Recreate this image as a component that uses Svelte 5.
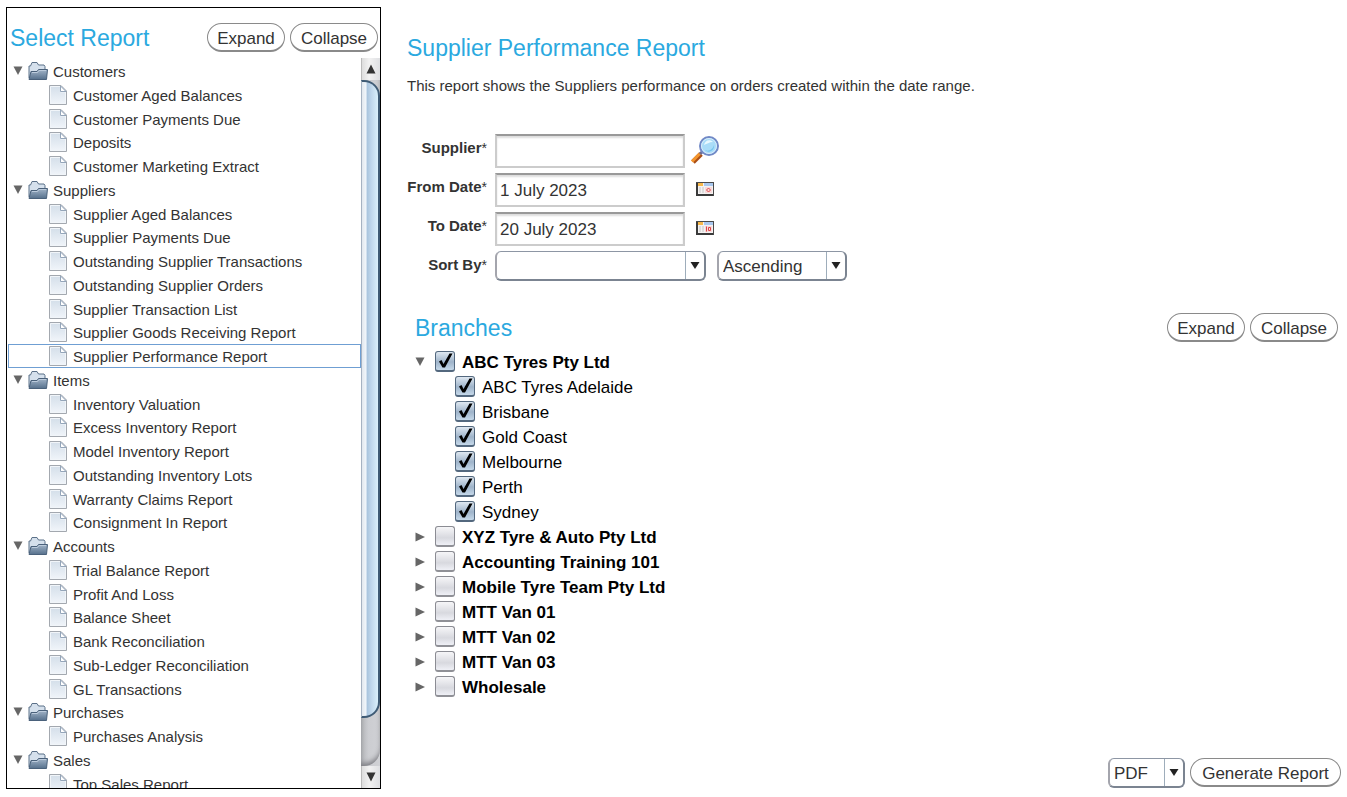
<script lang="ts">
	type Folder = { name: string; open: boolean; reports: string[] };
	type Branch = { name: string; open: boolean; checked: boolean; sites: { name: string; checked: boolean }[] };

	let folders: Folder[] = $state([
		{
			name: 'Customers',
			open: true,
			reports: ['Customer Aged Balances', 'Customer Payments Due', 'Deposits', 'Customer Marketing Extract']
		},
		{
			name: 'Suppliers',
			open: true,
			reports: [
				'Supplier Aged Balances',
				'Supplier Payments Due',
				'Outstanding Supplier Transactions',
				'Outstanding Supplier Orders',
				'Supplier Transaction List',
				'Supplier Goods Receiving Report',
				'Supplier Performance Report'
			]
		},
		{
			name: 'Items',
			open: true,
			reports: [
				'Inventory Valuation',
				'Excess Inventory Report',
				'Model Inventory Report',
				'Outstanding Inventory Lots',
				'Warranty Claims Report',
				'Consignment In Report'
			]
		},
		{
			name: 'Accounts',
			open: true,
			reports: [
				'Trial Balance Report',
				'Profit And Loss',
				'Balance Sheet',
				'Bank Reconciliation',
				'Sub-Ledger Reconciliation',
				'GL Transactions'
			]
		},
		{ name: 'Purchases', open: true, reports: ['Purchases Analysis'] },
		{ name: 'Sales', open: true, reports: ['Top Sales Report'] }
	]);

	const site = (name: string) => ({ name, checked: true });
	const closed = (name: string): Branch => ({ name, open: false, checked: false, sites: [] });

	let branches: Branch[] = $state([
		{
			name: 'ABC Tyres Pty Ltd',
			open: true,
			checked: true,
			sites: ['ABC Tyres Adelaide', 'Brisbane', 'Gold Coast', 'Melbourne', 'Perth', 'Sydney'].map(site)
		},
		closed('XYZ Tyre & Auto Pty Ltd'),
		closed('Accounting Training 101'),
		closed('Mobile Tyre Team Pty Ltd'),
		closed('MTT Van 01'),
		closed('MTT Van 02'),
		closed('MTT Van 03'),
		closed('Wholesale')
	]);

	let selected = $state('Supplier Performance Report');
	let supplier = $state('');
	let fromDate = $state('1 July 2023');
	let toDate = $state('20 July 2023');

	function toggleAll(list: { open: boolean }[], open: boolean) {
		for (const entry of list) entry.open = open;
	}
</script>

{#snippet triangle(open: boolean)}
	<svg class="triangle" viewBox="0 0 10 10" aria-hidden="true">
		<path d={open ? 'M0.5 0.5h9L5 9z' : 'M0.5 0.5v9L10 5z'} />
	</svg>
{/snippet}

{#snippet dropArrow()}
	<span class="drop">
		<svg width="10" height="8" viewBox="0 0 10 8" aria-hidden="true"><path d="M0.5 0h9L5 7z" fill="#222" /></svg>
	</span>
{/snippet}

{#snippet calendar(day: string)}
	<svg width="18" height="14" viewBox="0 0 18 14" aria-hidden="true">
		<rect x="0.5" y="0.5" width="17" height="13" fill="#f4f2f2" stroke="#4a4a4a" />
		<path d="M1 1v12h16" fill="none" stroke="#3a3a3a" stroke-width="2" />
		<path d="M2 1h5v3H2z" fill="#f7b84b" />
		<path d="M8 1h9v3H8z" fill="#a9c8ef" />
		<path d="M3 5h2v6H3zM6 5h2v6H6z" fill="#dedcdc" />
		<rect x="9" y="5" width="7" height="6" fill="#f8dada" />
		<path d={day} fill="none" stroke="#dc4548" />
	</svg>
{/snippet}

<svg class="defs" width="0" height="0" aria-hidden="true">
	<defs>
		<linearGradient id="folder" x2="0" y2="1">
			<stop offset="0" stop-color="#a3b5c9" />
			<stop offset="1" stop-color="#56708c" />
		</linearGradient>
		<linearGradient id="page" x2="0" y2="1">
			<stop offset="0" stop-color="#d3dee9" />
			<stop offset="1" stop-color="#f1f5fa" />
		</linearGradient>
	</defs>
</svg>

<div class="app">
	<aside>
		<header>
			<h2>Select Report</h2>
			<button class="pill expand" onclick={() => toggleAll(folders, true)}>Expand</button>
			<button class="pill collapse" onclick={() => toggleAll(folders, false)}>Collapse</button>
		</header>

		<div class="scroller">
			<ul class="reports">
				{#each folders as folder}
					<li>
						<button class="row" aria-expanded={folder.open} onclick={() => (folder.open = !folder.open)}>
							{@render triangle(folder.open)}
							<svg class="folder" width="20" height="20" viewBox="0 0 20 20" aria-hidden="true">
								<path d="M1 17V5h1.500L4 1.500h5L10.500 4H16l1 1.500V9" fill="#d5e0ec" stroke="#5b7088" />
								<path d="M1 18.500 3 10.500h6l1.500-2H19.500L18.500 18.500z" fill="url(#folder)" stroke="#4a617b" />
								<path d="M4 11.500h5.500l1.500-2H18" fill="none" stroke="#bccbdc" />
							</svg>
							<span>{folder.name}</span>
						</button>
					</li>
					{#if folder.open}
						{#each folder.reports as report}
							<li>
								<button class="row leaf" class:selected={report === selected} onclick={() => (selected = report)}>
									<svg width="18" height="20" viewBox="0 0 18 20" aria-hidden="true">
										<path d="M0.5 0.500h11.500l5.500 5.500v13.500H0.500z" fill="url(#page)" stroke="#a3a8af" />
										<path d="M1.500 1.500h10v5.500h5v11.500h-15z" fill="none" stroke="#f1f5f9" />
										<path d="M11.500 1v5.500h5.500z" fill="#fff" stroke="#94a5b9" />
									</svg>
									<span>{report}</span>
								</button>
							</li>
						{/each}
					{/if}
				{/each}
			</ul>
			<div class="scrollbar">
				<button aria-label="Scroll up">
					<svg width="10" height="10" viewBox="0 0 10 10"><path d="M5 0.500 9.500 9.500h-9z" fill="#333" /></svg>
				</button>
				<div class="track"><div class="thumb"></div></div>
				<button aria-label="Scroll down">
					<svg width="10" height="10" viewBox="0 0 10 10"><path d="M5 9.500 9.500 0.500h-9z" fill="#333" /></svg>
				</button>
			</div>
		</div>
	</aside>

	<main>
		<h1>Supplier Performance Report</h1>
		<p>This report shows the Suppliers performance on orders created within the date range.</p>

		<form onsubmit={(event) => event.preventDefault()}>
			<div class="field">
				<label for="supplier">Supplier<sup>*</sup></label>
				<input id="supplier" type="text" bind:value={supplier} />
				<button class="icon search" type="button" aria-label="Find supplier">
					<svg width="30" height="30" viewBox="0 0 30 30" aria-hidden="true">
						<path d="m3 27 8-8" stroke="#a94d16" stroke-width="5" />
						<path d="m2 26.500 8-8" stroke="#f3952d" stroke-width="3" />
						<path d="m10 19 4-4" stroke="#6c6c92" stroke-width="3" />
						<circle cx="19" cy="11" r="9" fill="#a9dcf8" stroke="#7189c6" stroke-width="2" />
						<circle cx="19" cy="11" r="7.500" fill="none" stroke="#d8ecfa" />
						<path d="M14 10c1-5 6-6 9-3-4 0-6 2-9 3z" fill="#e8f8ff" />
						<path d="M15 15c4 2 8-1 9-5 1 5-5 9-9 5z" fill="#75c5ef" />
					</svg>
				</button>
			</div>
			<div class="field">
				<label for="from">From Date<sup>*</sup></label>
				<input id="from" type="text" bind:value={fromDate} />
				<button class="icon" type="button" aria-label="Choose from date">
					{@render calendar('M10.500 8l2-2 2 2-2 2z')}
				</button>
			</div>
			<div class="field">
				<label for="to">To Date<sup>*</sup></label>
				<input id="to" type="text" bind:value={toDate} />
				<button class="icon" type="button" aria-label="Choose to date">
					{@render calendar('M10.500 5.500v5M12.500 6.500h2v3h-2z')}
				</button>
			</div>
			<div class="field">
				<label for="sort">Sort By<sup>*</sup></label>
				<span class="select sort">
					<select id="sort"><option></option></select>
					{@render dropArrow()}
				</span>
				<span class="select order">
					<select aria-label="Sort order">
						<option>Ascending</option>
						<option>Descending</option>
					</select>
					{@render dropArrow()}
				</span>
			</div>
		</form>

		<section>
			<header>
				<h2>Branches</h2>
				<button class="pill expand" onclick={() => toggleAll(branches, true)}>Expand</button>
				<button class="pill collapse" onclick={() => toggleAll(branches, false)}>Collapse</button>
			</header>
			<ul class="branches">
				{#each branches as branch}
					<li>
						<div class="branch">
							<button
								aria-label="Toggle {branch.name}"
								aria-expanded={branch.open}
								onclick={() => (branch.open = !branch.open)}
							>
								{@render triangle(branch.open)}
							</button>
							<label><input type="checkbox" bind:checked={branch.checked} /><b>{branch.name}</b></label>
						</div>
						{#if branch.open}
							<ul class="sites">
								{#each branch.sites as entry}
									<li>
										<label><input type="checkbox" bind:checked={entry.checked} /><span>{entry.name}</span></label>
									</li>
								{/each}
							</ul>
						{/if}
					</li>
				{/each}
			</ul>
		</section>

		<footer>
			<span class="select format">
				<select aria-label="Output format">
					<option>PDF</option>
					<option>CSV</option>
				</select>
				{@render dropArrow()}
			</span>
			<button class="pill generate">Generate Report</button>
		</footer>
	</main>
</div>

<style>
	:global(body) {
		margin: 0;
		background: #fff;
	}

	.defs {
		position: absolute;
	}

	.app {
		display: flex;
		gap: 26px;
		height: 100vh;
		padding: 7px 6px 8px;
		box-sizing: border-box;
		color: #333;
		font-family: 'Liberation Sans', Arial, sans-serif;
		font-size: 17px;
	}

	h1,
	h2 {
		margin: 0;
		color: #2ba9df;
		font-size: 23px;
		font-weight: normal;
		line-height: 28px;
	}

	h2 {
		flex: 1;
	}

	ul {
		margin: 0;
		padding: 0;
		list-style: none;
	}

	button {
		padding: 0;
		border: 0;
		background: none;
		color: inherit;
		font: inherit;
		cursor: pointer;
	}

	svg {
		display: block;
		flex: none;
	}

	header {
		display: flex;
		align-items: center;
		gap: 5px;
	}

	.pill {
		height: 29px;
		padding: 4px 0 0;
		border: 1px solid #8a8a8a;
		border-bottom-width: 2px;
		border-radius: 15px;
		box-sizing: border-box;
		background: #fff;
		line-height: 22px;
		text-align: center;
	}

	.expand {
		width: 78px;
	}

	.collapse {
		width: 88px;
	}

	.generate {
		width: 151px;
	}

	.triangle {
		width: 10px;
		height: 10px;
		fill: #666;
	}

	/* report list */

	aside {
		display: flex;
		flex: none;
		flex-direction: column;
		width: 375px;
		border: 1px solid #000;
		box-sizing: border-box;
		overflow: hidden;
	}

	aside header {
		padding: 15px 2px 6px 3px;
	}

	.scroller {
		display: flex;
		flex: 1;
		min-height: 0;
	}

	.reports {
		flex: 1;
		min-width: 0;
		padding: 1px 0 0 1px;
		overflow: hidden;
		font-size: 15px;
	}

	.reports li {
		height: 24px;
	}

	.reports li:nth-child(4n + 3) {
		height: 23px;
	}

	.row {
		display: flex;
		align-items: center;
		gap: 5px;
		width: 100%;
		height: 24px;
		padding-left: 4px;
		border: 1px solid transparent;
		box-sizing: border-box;
		text-align: left;
		white-space: nowrap;
	}

	.row span {
		padding-top: 2px;
		line-height: 20px;
	}

	.leaf {
		gap: 6px;
		padding-left: 40px;
	}

	.selected {
		border-color: #6f9fd3;
	}

	.scrollbar {
		display: flex;
		flex: none;
		flex-direction: column;
		width: 19px;
		background: linear-gradient(90deg, #b4b6ba, #cccdd1 40%, #d0d1d5);
	}

	.scrollbar button {
		display: flex;
		align-items: center;
		justify-content: center;
		height: 22px;
		border-left: 1px solid #bbb;
		background: linear-gradient(90deg, #ddd, #f2f2f2 40%, #dedfe2);
	}

	.track {
		flex: 1;
		border-bottom-right-radius: 16px;
		box-shadow: inset 0 -4px 5px -1px #808186;
	}

	.thumb {
		height: 93%;
		border: 2px solid #3f5b75;
		border-left: 1px solid #a6b2c2;
		border-radius: 0 16px 16px 0;
		box-sizing: border-box;
		background: linear-gradient(90deg, #e1e7ee, #f1f6fb 25%, #a9c4de 32%, #c1d8ec 60%, #daf0fb);
	}

	/* report parameters */

	main {
		display: flex;
		flex: 1;
		flex-direction: column;
		min-width: 0;
	}

	h1 {
		margin-top: 27px;
	}

	p {
		margin: 14px 0 38px;
		font-size: 15px;
		line-height: 20px;
	}

	form {
		display: flex;
		flex-direction: column;
		gap: 5px;
	}

	.field {
		display: flex;
		height: 34px;
	}

	.field label {
		width: 80px;
		margin-right: 8px;
		font-size: 15px;
		font-weight: bold;
		line-height: 28px;
		text-align: right;
		white-space: nowrap;
	}

	sup {
		font-size: 14px;
		font-weight: normal;
		line-height: 0;
		vertical-align: baseline;
	}

	.field input {
		width: 190px;
		padding: 2px 3px 0;
		border: 2px solid #ccc;
		border-top-color: #999;
		border-radius: 0;
		box-sizing: border-box;
		background: #fff;
		box-shadow: inset 0 2px 2px #ddd;
		color: inherit;
		font: inherit;
	}

	.icon {
		display: flex;
		align-items: center;
		justify-content: center;
		width: 20px;
		height: 32px;
		margin-left: 10px;
	}

	.search {
		width: 30px;
		margin-left: 5px;
	}

	.select {
		position: relative;
		height: 30px;
	}

	.sort {
		width: 211px;
		margin-right: 11px;
	}

	.order {
		width: 130px;
	}

	.format {
		width: 77px;
	}

	select {
		width: 100%;
		height: 100%;
		padding: 2px 24px 0 4px;
		border: 2px solid #7b8491;
		border-top: 1px solid #8d96a4;
		border-left-color: #a4a5ad;
		border-radius: 6px;
		box-sizing: border-box;
		appearance: none;
		background: #fff;
		color: inherit;
		font: inherit;
	}

	.drop {
		display: flex;
		position: absolute;
		top: 1px;
		right: 2px;
		bottom: 2px;
		align-items: center;
		justify-content: center;
		width: 18px;
		border-left: 1px solid #9eadbb;
		pointer-events: none;
	}

	/* branches */

	section {
		flex: 1;
		padding: 28px 3px 0 8px;
	}

	.branches {
		margin-top: 7px;
		color: #000;
	}

	.branch {
		display: flex;
		align-items: center;
		gap: 8px;
	}

	.branches button {
		width: 12px;
	}

	.branches label {
		display: flex;
		align-items: center;
		gap: 7px;
		height: 25px;
	}

	.branches b,
	.branches span {
		padding-top: 2px;
	}

	.sites {
		padding-left: 40px;
	}

	input[type='checkbox'] {
		width: 20px;
		height: 21px;
		margin: 0;
		border: 1px solid #8b8c93;
		border-bottom: 2px solid #8f9096;
		border-radius: 3px;
		appearance: none;
		background: linear-gradient(#f6f6f8, #d8d9df 60%, #eff0f6);
	}

	input[type='checkbox']:checked {
		border-color: #53687e;
		background:
			url("data:image/svg+xml,%3Csvg xmlns='http://www.w3.org/2000/svg' viewBox='0 0 18 18'%3E%3Cpath d='M3 9.500l2.500-1.500 2 4L13.500 1.500h3L9 15.500H6.500z'/%3E%3C/svg%3E"),
			linear-gradient(#dfe8f1, #9fb4ca 55%, #c5d8e9);
	}

	footer {
		display: flex;
		justify-content: flex-end;
		gap: 5px;
		padding-bottom: 1px;
	}
</style>
